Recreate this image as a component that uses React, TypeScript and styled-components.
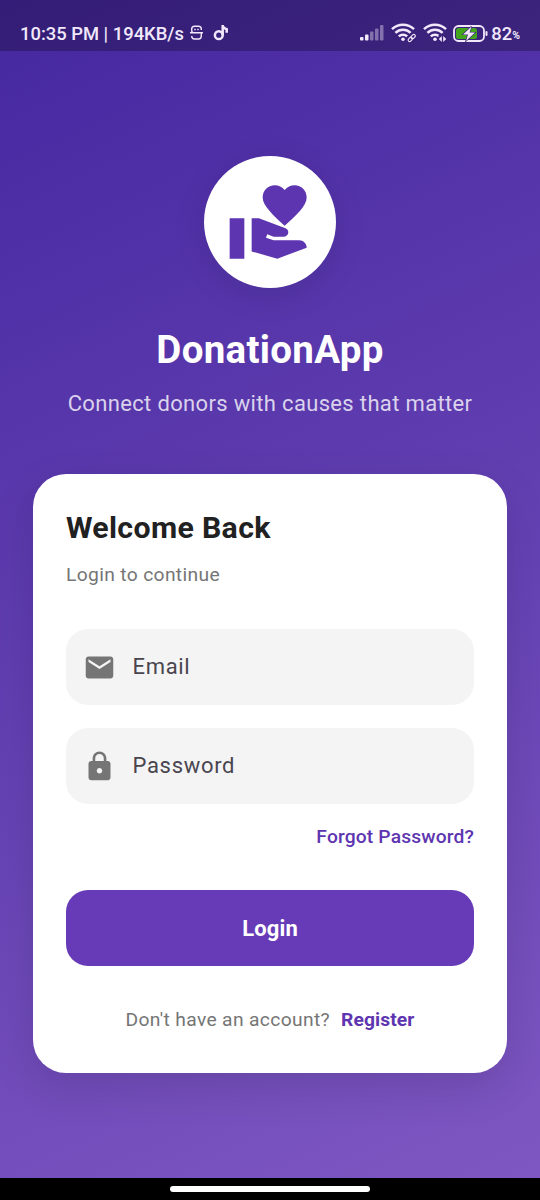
import React from "react";
import styled, { createGlobalStyle } from "styled-components";
import { MdEmail, MdLock, MdVolunteerActivism } from "react-icons/md";

const GlobalStyle = createGlobalStyle`
  *, *::before, *::after { box-sizing: border-box; }
  body { margin: 0; font-family: Roboto, sans-serif; }
  button, input { font-family: inherit; }
`;

const Screen = styled.div`
  width: 540px;
  height: 1200px;
  display: flex;
  flex-direction: column;
  overflow: hidden;
  background: #000;
`;

const Backdrop = styled.div`
  height: 1178px;
  display: flex;
  flex-direction: column;
  align-items: center;
  background: linear-gradient(155.4deg, #4527a0, #7e57c2);
`;

const StatusBar = styled.header`
  width: 100%;
  height: 51px;
  flex: none;
  display: flex;
  justify-content: space-between;
  padding: 15px 20px 0;
  background: rgba(0, 0, 0, 0.25);
  color: #f1e9fb;
`;

const StatusGroup = styled.div`
  height: 36px;
  display: flex;
  align-items: center;
`;

const StatusText = styled.span<{ $gap?: number }>`
  margin-left: ${(p) => p.$gap ?? 0}px;
  font-size: 18.4px;
  font-weight: 500;
  white-space: nowrap;
`;

const Percent = styled.span`
  font-size: 10.5px;
  font-weight: 700;
  padding-top: 5px;
`;

const StatusIcon = styled.svg<{ $gap: number }>`
  flex: none;
  display: block;
  margin-left: ${(p) => p.$gap}px;
`;

const LogoDisc = styled.div`
  width: 132px;
  height: 132px;
  flex: none;
  margin-top: 105px;
  border-radius: 50%;
  display: grid;
  place-items: center;
  background: #fff;
  color: #5e35b1;
  box-shadow: 0 7px 33px rgba(0, 0, 0, 0.1);
`;

const AppName = styled.h1`
  margin: 39px 0 0;
  font-size: 38.5px;
  line-height: 46px;
  font-weight: 700;
  letter-spacing: 0.3px;
  color: #fff;
`;

const Tagline = styled.p`
  margin: 17px 0 0;
  font-size: 22px;
  line-height: 27px;
  letter-spacing: 0.34px;
  color: rgba(255, 255, 255, 0.78);
  white-space: nowrap;
`;

const Card = styled.main`
  width: 474px;
  height: 599px;
  margin-top: 57px;
  padding: 36px 33px 0;
  display: flex;
  flex-direction: column;
  border-radius: 33px;
  background: #fff;
  box-shadow: 0 14px 44px rgba(0, 0, 0, 0.12);
`;

const Heading = styled.h2`
  margin: 0;
  font-size: 30.25px;
  line-height: 36px;
  font-weight: 700;
  letter-spacing: 0.34px;
  color: #212121;
`;

const Subheading = styled.p`
  margin: 17px 0 0;
  font-size: 19.25px;
  line-height: 24px;
  letter-spacing: 0.34px;
  color: #757575;
`;

const Field = styled.label<{ $top: number }>`
  height: 76px;
  margin-top: ${(p) => p.$top}px;
  padding: 0 16.5px;
  display: flex;
  align-items: center;
  gap: 17px;
  border-radius: 22px;
  background: #f4f4f4;
  color: #757575;
`;

const FieldLabel = styled.span`
  font-size: 22px;
  line-height: 26px;
  letter-spacing: 0.69px;
  color: #49454f;
`;

const ForgotLink = styled.a`
  align-self: flex-end;
  margin-top: 21px;
  font-size: 19.25px;
  line-height: 24px;
  font-weight: 500;
  letter-spacing: 0.14px;
  color: #5e35b1;
`;

const LoginButton = styled.button`
  height: 76px;
  margin-top: 41px;
  border: 0;
  border-radius: 22px;
  background: #673ab7;
  color: #fff;
  font-size: 22px;
  font-weight: 700;
  letter-spacing: 0.14px;
`;

const RegisterRow = styled.div`
  margin-top: 42px;
  display: flex;
  justify-content: center;
  gap: 11px;
  font-size: 19.25px;
  line-height: 24px;
  color: #757575;
`;

const Prompt = styled.span`
  letter-spacing: 0.34px;
`;

const RegisterLink = styled.a`
  font-weight: 700;
  letter-spacing: 0.1px;
  color: #5e35b1;
`;

const NavBar = styled.footer`
  height: 22px;
  display: flex;
  justify-content: center;
  padding-top: 8px;
`;

const NavHandle = styled.div`
  width: 200px;
  height: 6px;
  border-radius: 3px;
  background: #fff;
`;

const WifiArcs = () => (
  <g fill="none" stroke="currentColor" strokeWidth="2.5">
    <path d="M1 6.200a16 16 0 0 1 22 0" />
    <path d="M4.400 9.900a11 11 0 0 1 15.200 0" />
    <path d="M7.800 13.400a6 6 0 0 1 8.400 0" />
    <circle cx="12" cy="16.200" r="1.800" fill="currentColor" stroke="none" />
  </g>
);

export default function App() {
  return (
    <Screen>
      <GlobalStyle />
      <Backdrop>
        <StatusBar>
          <StatusGroup>
            <StatusText>10:35 PM | 194KB/s</StatusText>
            <StatusIcon $gap={6} width="13" height="16" viewBox="0 0 13 16" fill="none" stroke="currentColor" strokeWidth="1.4">
              <path d="M11.300 5V4Q11.300 1.300 8.500 1.300h-4Q1.700 1.300 1.700 4v1.500Q1.700 7.800 4 7.800M0 7.800h13M11.300 7.800v3.200Q11.300 14 8.500 14h-4Q1.700 14 1.700 11" />
              <path d="M4.300 4.500h1.400M7.300 4.500h1.400" />
            </StatusIcon>
            <StatusIcon $gap={10} width="16" height="18" viewBox="0 0 16 18" fill="none" stroke="currentColor" strokeWidth="2.500">
              <circle cx="5.800" cy="11.200" r="3.900" />
              <path d="M9.700 11.200V1Q10 4.300 13.700 5.300v3.400" />
            </StatusIcon>
          </StatusGroup>
          <StatusGroup>
            <StatusIcon $gap={0} width="24" height="16" viewBox="0 0 24 16" fill="currentColor">
              <rect x="0" y="12" width="3.500" height="3.500" rx="1" />
              <rect x="5" y="9.500" width="3.500" height="6" rx="1" />
              <rect x="10" y="6.500" width="3.500" height="9" rx="1" opacity=".4" />
              <rect x="15" y="3.500" width="3.500" height="12" rx="1" opacity=".4" />
              <rect x="20" y="0" width="3.500" height="15.500" rx="1" opacity=".4" />
            </StatusIcon>
            <StatusIcon $gap={7} width="25" height="20" viewBox="0 0 25 20">
              <WifiArcs />
              <circle cx="20.700" cy="15" r="4.500" fill="#3a2078" />
              <g transform="rotate(-45 20.700 15)" fill="none" stroke="currentColor" strokeWidth="1.100">
                <rect x="16.300" y="13.500" width="4.800" height="3" rx="1.500" />
                <rect x="20.300" y="13.500" width="4.800" height="3" rx="1.500" />
              </g>
            </StatusIcon>
            <StatusIcon $gap={7} width="25" height="20" viewBox="0 0 25 20">
              <WifiArcs />
              <path d="M15.500 20v-8h8v8z" fill="#3a2078" />
              <path d="M18.800 13v6l-3-3zM20.200 19v-6l3 3z" fill="currentColor" />
            </StatusIcon>
            <StatusIcon $gap={5} width="35" height="17" viewBox="0 0 35 17">
              <rect x="1" y="1" width="30" height="15" rx="4.500" fill="none" stroke="currentColor" strokeWidth="1.800" />
              <rect x="3" y="3" width="21" height="11" rx="2.500" fill="#43a51c" />
              <path d="M18.500 1.500L10 9.500h5l-2 6.500 9-8.500h-5.500z" fill="currentColor" stroke="#3a2078" strokeWidth="1.200" paintOrder="stroke" />
              <rect x="32.500" y="6" width="2" height="5" rx="1" fill="currentColor" />
            </StatusIcon>
            <StatusText $gap={3}>82</StatusText>
            <Percent>%</Percent>
          </StatusGroup>
        </StatusBar>
        <LogoDisc>
          <MdVolunteerActivism size={88} />
        </LogoDisc>
        <AppName>DonationApp</AppName>
        <Tagline>Connect donors with causes that matter</Tagline>
        <Card>
          <Heading>Welcome Back</Heading>
          <Subheading>Login to continue</Subheading>
          <Field $top={42}>
            <MdEmail size={33} />
            <FieldLabel>Email</FieldLabel>
          </Field>
          <Field $top={23}>
            <MdLock size={33} />
            <FieldLabel>Password</FieldLabel>
          </Field>
          <ForgotLink>Forgot Password?</ForgotLink>
          <LoginButton>Login</LoginButton>
          <RegisterRow>
            <Prompt>Don't have an account?</Prompt>
            <RegisterLink>Register</RegisterLink>
          </RegisterRow>
        </Card>
      </Backdrop>
      <NavBar>
        <NavHandle />
      </NavBar>
    </Screen>
  );
}
